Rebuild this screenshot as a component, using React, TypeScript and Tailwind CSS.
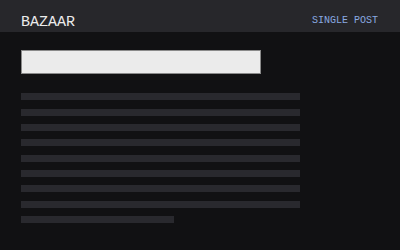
import React from "react";

export default function App() {
  const lines = [0, 1, 2, 3, 4, 5, 6, 7];
  return (
    <div className="w-[400px] h-[250px] bg-[#111113] overflow-hidden flex flex-col">
      <header className="h-8 bg-[#27272b] flex items-start justify-between pl-[21px] pr-[22px] shrink-0">
        <span className="mt-[14.5px] text-[15px] leading-none text-[#ececec] font-['Liberation_Mono',monospace]">
          BAZAAR
        </span>
        <span className="mt-[16.3px] text-[10px] leading-none text-[#8aaae2] font-['Liberation_Mono',monospace]">
          SINGLE POST
        </span>
      </header>
      <main className="flex flex-col pl-[21px] pt-[18px]">
        <div className="w-[240px] h-[24px] bg-[#ebebeb] border border-[#8a8a8a]" />
        <div className="flex flex-col gap-[8.33px] mt-[19.3px]">
          {lines.map((i) => (
            <div key={i} className="w-[279px] h-[7px] bg-[#29292e]" />
          ))}
          <div className="w-[153px] h-[7px] bg-[#29292e]" />
        </div>
      </main>
    </div>
  );
}
